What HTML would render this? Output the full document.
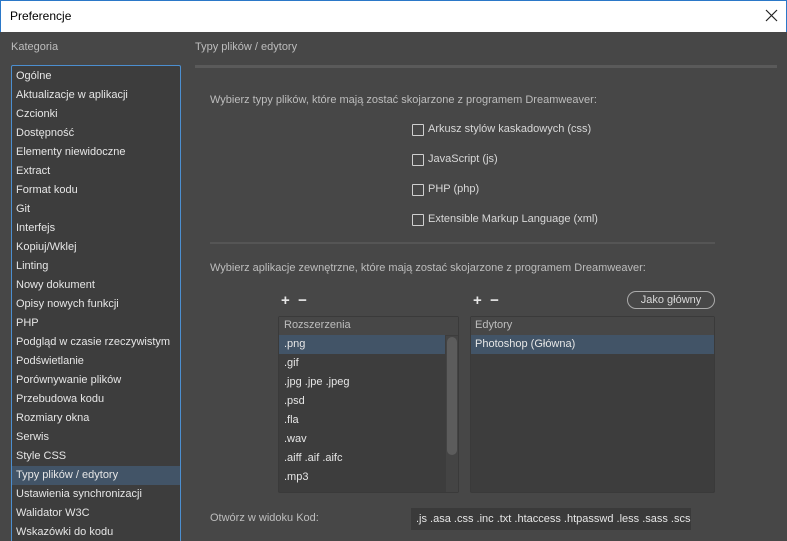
<!DOCTYPE html><html><head><style>
*{margin:0;padding:0;box-sizing:border-box}
html,body{width:787px;height:541px;overflow:hidden}
body{background:#474747;font-family:"Liberation Sans",sans-serif;font-size:11px;color:#d8d8d8;position:relative}
.a{position:absolute;white-space:nowrap}
.title{left:0;top:0;width:787px;height:32px;background:#fff;color:#000;font-size:12px;border:1px solid #2b78c8;border-bottom:none}
.side{left:11px;top:65px;width:170px;height:480px;background:#3d3d3d;border:1px solid #4c8fd0;border-radius:2px;padding-top:1px}
.side div{height:19px;line-height:19px;padding-left:4px;color:#e6e6e6}
.side .s{background:#425467}
.cb{width:12px;height:12px;border:1px solid #cfcfcf;border-radius:1px}
.list{background:#3d3d3d;border:1px solid #3a3a3a;border-radius:2px}
.it{height:19px;line-height:19px;padding-left:5px;color:#e6e6e6}
</style></head><body>
<div class="a title"><span class="a" style="left:9px;top:8px">Preferencje</span>
<svg class="a" style="left:764px;top:8px" width="13" height="13" viewBox="0 0 13 13"><path d="M1 1L12 12M12 1L1 12" stroke="#222" stroke-width="1.2"/></svg></div>
<div class="a" style="left:11px;top:41px;color:#bdbdbd">Kategoria</div>
<div class="a side">
<div>Ogólne</div><div>Aktualizacje w aplikacji</div><div>Czcionki</div><div>Dostępność</div><div>Elementy niewidoczne</div><div>Extract</div><div>Format kodu</div><div>Git</div><div>Interfejs</div><div>Kopiuj/Wklej</div><div>Linting</div><div>Nowy dokument</div><div>Opisy nowych funkcji</div><div>PHP</div><div>Podgląd w czasie rzeczywistym</div><div>Podświetlanie</div><div>Porównywanie plików</div><div>Przebudowa kodu</div><div>Rozmiary okna</div><div>Serwis</div><div>Style CSS</div><div class="s">Typy plików / edytory</div><div>Ustawienia synchronizacji</div><div>Walidator W3C</div><div>Wskazówki do kodu</div>
</div>
<div class="a" style="left:195px;top:41px;color:#bdbdbd">Typy plików / edytory</div>
<div class="a" style="left:195px;top:65px;width:582px;height:3px;background:#5a5a5a"></div>
<div class="a" style="left:210px;top:94px;color:#bdbdbd">Wybierz typy plików, które mają zostać skojarzone z programem Dreamweaver:</div>
<div class="a cb" style="left:412px;top:124px"></div><div class="a" style="left:428px;top:123px">Arkusz stylów kaskadowych (css)</div>
<div class="a cb" style="left:412px;top:154px"></div><div class="a" style="left:428px;top:153px">JavaScript (js)</div>
<div class="a cb" style="left:412px;top:184px"></div><div class="a" style="left:428px;top:183px">PHP (php)</div>
<div class="a cb" style="left:412px;top:214px"></div><div class="a" style="left:428px;top:213px">Extensible Markup Language (xml)</div>
<div class="a" style="left:210px;top:242px;width:505px;height:2px;background:#555"></div>
<div class="a" style="left:210px;top:262px;color:#bdbdbd">Wybierz aplikacje zewnętrzne, które mają zostać skojarzone z programem Dreamweaver:</div>
<div class="a" style="left:281px;top:292px;font-size:15px;font-weight:bold;color:#e6e6e6">+&nbsp;&nbsp;−</div>
<div class="a" style="left:473px;top:292px;font-size:15px;font-weight:bold;color:#e6e6e6">+&nbsp;&nbsp;−</div>
<div class="a" style="left:627px;top:291px;width:88px;height:18px;border:1px solid #aaa;border-radius:9px;text-align:center;line-height:16px;color:#d8d8d8">Jako główny</div>
<div class="a list" style="left:278px;top:316px;width:181px;height:177px">
<div style="height:18px;line-height:16px;padding-left:5px;color:#bdbdbd;background:#474747">Rozszerzenia</div>
<div class="it" style="background:#425467;width:166px">.png</div><div class="it">.gif</div><div class="it">.jpg .jpe .jpeg</div><div class="it">.psd</div><div class="it">.fla</div><div class="it">.wav</div><div class="it">.aiff .aif .aifc</div><div class="it">.mp3</div>
<div class="a" style="left:167px;top:19px;width:12px;height:156px;background:#444"></div>
<div class="a" style="left:168px;top:20px;width:10px;height:118px;background:#5c5c5c;border-radius:5px"></div>
</div>
<div class="a list" style="left:470px;top:316px;width:245px;height:177px">
<div style="height:18px;line-height:16px;padding-left:4px;color:#bdbdbd;background:#474747">Edytory</div>
<div class="it" style="background:#425467;padding-left:4px">Photoshop (Główna)</div>
</div>
<div class="a" style="left:210px;top:512px;color:#bdbdbd">Otwórz w widoku Kod:</div>
<div class="a" style="left:411px;top:508px;width:280px;height:22px;background:#3a3a3a;line-height:22px;padding-left:5px;overflow:hidden;color:#e6e6e6">.js .asa .css .inc .txt .htaccess .htpasswd .less .sass .scss</div>
</body></html>
